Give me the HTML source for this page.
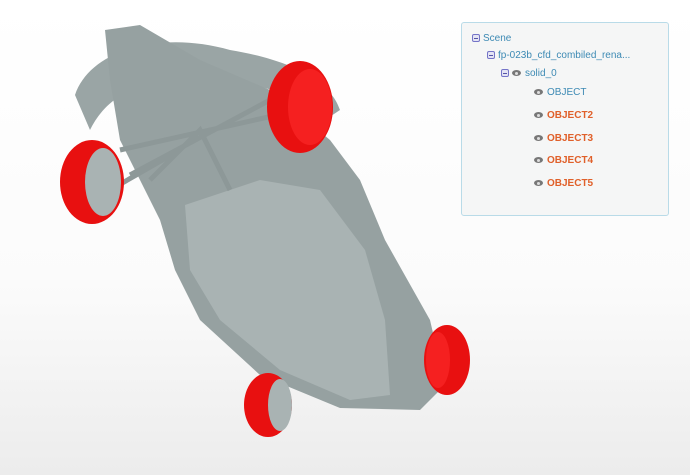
<!DOCTYPE html>
<html><head><style>
html,body{margin:0;padding:0}
body{width:690px;height:475px;overflow:hidden;position:relative;background:linear-gradient(#ffffff 0%,#fbfbfb 60%,#ececec 100%);font-family:"Liberation Sans",sans-serif}
svg{position:absolute;left:0;top:0}
.panel{position:absolute;left:461px;top:22px;width:208px;height:194px;border:1px solid #b9dbe8;border-radius:3px;background:#f5f6f6;box-sizing:border-box;font-size:10px}
.row{position:absolute;white-space:nowrap;color:#3d8ab4;height:12px;line-height:12px}
.m{display:inline-block;width:8px;height:8px;border:1px solid #7474c8;border-radius:2px;background:#e4e4f4;box-sizing:border-box;vertical-align:-1px;margin-right:3px;position:relative}
.m:after{content:"";position:absolute;left:1px;top:2.5px;width:4px;height:1px;background:#5454a8}
.e{display:inline-block;width:9px;height:6px;border-radius:50%;background:#777;vertical-align:0;margin-right:4px;position:relative}
.e:after{content:"";position:absolute;left:3px;top:1.5px;width:3px;height:3px;border-radius:50%;background:#ddd}
.o{color:#e0602a;font-weight:bold}
</style></head><body>
<svg width="690" height="475" viewBox="0 0 690 475">
<path d="M75 95 C90 50 160 30 230 50 C290 60 330 80 340 110 L325 120 C300 90 230 75 170 80 C120 85 100 110 90 130 Z" fill="#9aa5a5"/>
<path d="M105 30 L140 25 L200 60 L270 90 L330 140 L360 180 L385 240 L430 320 L445 385 L420 410 L340 408 L260 375 L200 320 L175 270 L160 220 L140 180 L120 140 L110 80 Z" fill="#96a1a1"/>
<path d="M185 205 L260 180 L320 190 L365 250 L385 320 L390 395 L350 400 L280 370 L220 320 L190 270 Z" fill="#a9b3b3"/>
<path d="M120 150 L300 110 M130 175 L270 100 M150 180 L200 130 L230 190 M110 190 L180 150" stroke="#8d9898" stroke-width="5" fill="none"/>
<ellipse cx="300" cy="107" rx="33" ry="46" fill="#e81010"/>
<ellipse cx="310" cy="107" rx="22" ry="38" fill="#f52020"/>
<ellipse cx="92" cy="182" rx="32" ry="42" fill="#e81010"/>
<ellipse cx="103" cy="182" rx="18" ry="34" fill="#a9b3b3"/>
<ellipse cx="447" cy="360" rx="23" ry="35" fill="#e81010"/>
<ellipse cx="438" cy="360" rx="12" ry="28" fill="#f52020"/>
<ellipse cx="268" cy="405" rx="24" ry="32" fill="#e81010"/>
<ellipse cx="280" cy="405" rx="12" ry="26" fill="#a9b3b3"/>
</svg>
<div class="panel">
<div class="row" style="left:10px;top:10px"><span class="m"></span>Scene</div>
<div class="row" style="left:25px;top:27px"><span class="m"></span>fp-023b_cfd_combiled_rena...</div>
<div class="row" style="left:39px;top:45px"><span class="m"></span><span class="e"></span>solid_0</div>
<div class="row" style="left:72px;top:64px"><span class="e"></span>OBJECT</div>
<div class="row o" style="left:72px;top:87px"><span class="e"></span>OBJECT2</div>
<div class="row o" style="left:72px;top:110px"><span class="e"></span>OBJECT3</div>
<div class="row o" style="left:72px;top:132px"><span class="e"></span>OBJECT4</div>
<div class="row o" style="left:72px;top:155px"><span class="e"></span>OBJECT5</div>
</div>
</body></html>
